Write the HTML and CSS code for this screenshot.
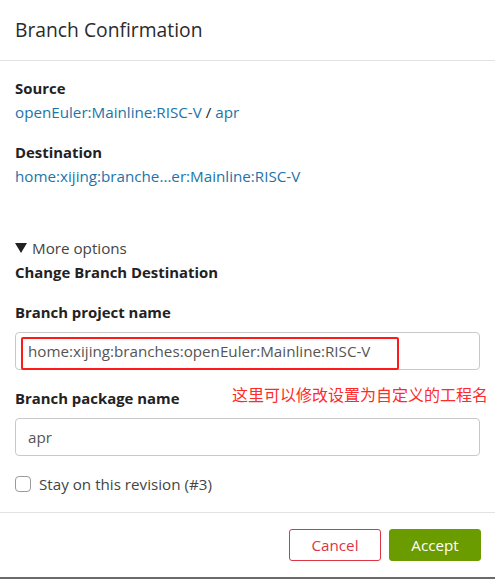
FILE: index.html
```html
<!DOCTYPE html>
<html>
<head>
<meta charset="utf-8">
<link rel="stylesheet" href="styles.css">
</head>
<body>
<div class="modal">
  <div class="modal-header">
    <h5 class="modal-title">Branch Confirmation</h5>
  </div>
  <div class="modal-body">
    <div class="group">
      <div class="label">Source</div>
      <div><a class="link">openEuler:Mainline:RISC-V</a> / <a class="link">apr</a></div>
    </div>
    <div class="group">
      <div class="label">Destination</div>
      <div><a class="link">home:xijing:branche...er:Mainline:RISC-V</a></div>
    </div>
    <div class="more">
      <div class="summary"><svg class="tri" width="12" height="10" viewBox="0 0 12 10"><polygon points="0,0 12,0 6,10" fill="#222"/></svg>More options</div>
      <div class="label">Change Branch Destination</div>
      <div class="field">
        <div class="label">Branch project name</div>
        <div class="input-wrap">
          <div class="input">home:xijing:branches:openEuler:Mainline:RISC-V</div>
          <div class="highlight"></div>
          <div class="note">这里可以修改设置为自定义的工程名</div>
        </div>
      </div>
      <div class="field">
        <div class="label">Branch package name</div>
        <div class="input">apr</div>
      </div>
      <div class="check">
        <span class="box"></span>
        <span>Stay on this revision (#3)</span>
      </div>
    </div>
  </div>
  <div class="modal-footer">
    <button class="btn btn-cancel">Cancel</button>
    <button class="btn btn-accept">Accept</button>
  </div>
  <div class="backdrop-edge"></div>
</div>
</body>
</html>
```

FILE: styles.css
```css
* { box-sizing: border-box; }
html, body { margin: 0; padding: 0; background: #fff; }
body {
  font-family: "Open Sans", "Noto Sans", sans-serif;
  font-size: 15.2px;
  line-height: 24px;
  color: #212529;
}
.modal {
  width: 495px;
  height: 579px;
  display: flex;
  flex-direction: column;
}
.modal-header {
  height: 61px;
  padding: 0 15px;
  display: flex;
  align-items: center;
  border-bottom: 1px solid #e3e3e3;
}
.modal-title {
  margin: 0;
  font-size: 19.3px;
  font-weight: 400;
  color: #2b2b2b;
  line-height: 24px;
}
.modal-body {
  padding: 15px 15px 16px;
  flex: 0 0 auto;
}
.group { margin-bottom: 16px; }
.group + .group { margin-bottom: 48px; }
.label { font-weight: 700; color: #222; font-size: 14.9px; }
.link { color: #1d74a8; text-decoration: none; }
.summary { color: #444; display: flex; align-items: center; }
.tri { margin-right: 5px; margin-top: -1px; }
.field { margin-top: 16px; }
.field .label { margin-bottom: 8px; }
.input-wrap { position: relative; }
.input {
  height: 38px;
  border: 1px solid #c9c9c9;
  border-radius: 4px;
  padding: 0 12px;
  display: flex;
  align-items: center;
  color: #555;
  background: #fff;
}
.highlight {
  position: absolute;
  left: 6px;
  top: 5px;
  width: 378px;
  height: 33px;
  border: 2px solid #ff1a1a;
  border-radius: 2px;
}
.note {
  position: absolute;
  left: 217px;
  top: 50px;
  color: #ff2a2a;
  font-family: "Noto Sans CJK SC", sans-serif;
  font-size: 16px;
  line-height: 24px;
  white-space: nowrap;
}
.check {
  margin-top: 16px;
  display: flex;
  align-items: center;
  gap: 8px;
  color: #444;
}
.box {
  width: 16px;
  height: 16px;
  margin-top: -1px;
  border: 1px solid #9a9a9a;
  border-radius: 4px;
}
.modal-footer {
  border-top: 1px solid #e3e3e3;
  display: flex;
  justify-content: flex-end;
  gap: 8px;
  padding: 16px 14px 0;
  height: 64px;
}
.btn {
  height: 32px;
  border-radius: 3px;
  font-family: inherit;
  font-size: 15.2px;
  padding: 0;
  cursor: pointer;
}
.btn-cancel {
  width: 92px;
  background: #fff;
  border: 1px solid #dc3545;
  color: #dc3545;
}
.btn-accept {
  width: 92px;
  background: #6a9c00;
  border: 1px solid #6a9c00;
  color: #fff;
}
.backdrop-edge {
  margin-top: auto;
  height: 2px;
  background: #6b6b6b;
}
```
